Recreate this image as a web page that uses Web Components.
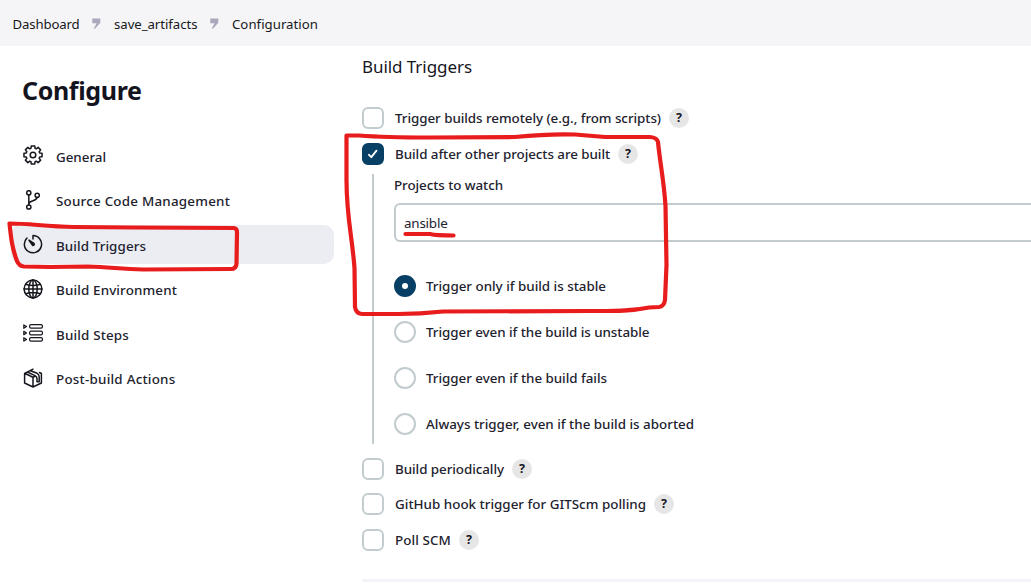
<!DOCTYPE html>
<html lang="en">
<head>
<meta charset="utf-8">
<title>Configure</title>
<style>
html,body{margin:0;height:584px;overflow:hidden;background:#fff}
body{font:460 13.4px/20px "Noto Sans","Open Sans",sans-serif;color:#22222e}
</style>
</head>
<body>
<config-page></config-page>
<script>
const define=(name,html,setup)=>customElements.define(name,class extends HTMLElement{
  connectedCallback(){
    if(this.shadowRoot)return;
    this.attachShadow({mode:'open'}).innerHTML=html;
    if(setup)setup(this,this.shadowRoot);
  }
});

// A single line of text tracked to an exact width.
define('text-run',`<style>:host{display:block;white-space:nowrap;flex:none}span{display:inline-block}</style><span><slot></slot></span>`,(el,root)=>{
  const w=+el.getAttribute('w'),s=root.querySelector('span');
  const n=el.textContent.length;
  s.style.letterSpacing=((w-s.getBoundingClientRect().width)/n).toFixed(3)+'px';
  el.style.width=w+'px';
});

define('crumb-mark',`<style>:host{display:block;width:9px;height:11px}svg{display:block}</style>
<svg width="9" height="11"><path d="M.3 .5H8.300V4.800L3.200 10.500H1.700L4.600 5.200H.3Z" fill="#aaa8bc"/></svg>`);

define('crumb-bar',`<style>
:host{display:flex;box-sizing:border-box;height:46px;padding:1px 0 0 12.500px;align-items:center;background:#f5f5f8;font-size:13.2px;font-weight:400;color:#181820}
crumb-mark{margin:-1px 13.500px 0 12px}
</style>
<text-run w="67">Dashboard</text-run><crumb-mark></crumb-mark><text-run w="83.500">save_artifacts</text-run><crumb-mark></crumb-mark><text-run w="86">Configuration</text-run>`);

const icons={
gear:'',
branch:'<circle cx="5.800" cy="2.800" r="2.100"/><circle cx="5.800" cy="17" r="2.100"/><circle cx="14.200" cy="5.300" r="2.100"/><path d="M5.800 5v10M14 7.500c0 4-8 2.500-8.200 6.500"/>',
timer:'<path d="M10 5V1.600a8.600 8.600 0 1 1-6.100 2.500"/><path d="M6 6.200l5 3.300c1 1-.5 2.500-1.600 1.600z" fill="#16161f"/>',
globe:'<circle cx="10" cy="10" r="8.900"/><ellipse cx="10" cy="10" rx="4.200" ry="8.900"/><path d="M10 1v18M1 10h18M2.700 5.200Q10 8 17.300 5.200M2.700 14.800Q10 12 17.300 14.800"/>',
steps:'<g stroke-width="1.200"><rect x="6.600" y="1.600" width="12.800" height="3.600" rx="1.400"/><rect x="6.600" y="8.200" width="12.800" height="3.600" rx="1.400"/><rect x="6.600" y="14.600" width="12.800" height="3.600" rx="1.400"/><path d="M.8 1.900v3.400l2.700-1.700zM.8 8.300v3.400L3.500 10zM.8 14.700v3.400l2.700-1.700z"/></g>',
box:'<path d="M10 19 1.600 15V5.300L10 1.200M1.600 5.300 10 9.200l2-.9M10 9.200V19l8.400-4V5.500L16.500 4.500M4.400 4 12 7.600c1.500.8 2 1.500 2 3v3.200h2.200V9c0-2-.6-3-2-3.700L7.500 2.700"/>'};

// Eight-toothed outline, alternating between the tooth and valley radii.
{
  const p=[];
  for(let k=0;k<8;k++)for(const [d,r] of [[-11,9.200],[11,9.200],[17,7],[28,7]]){
    const a=(k*45+d-90)*Math.PI/180;
    p.push((10+r*Math.cos(a)).toFixed(2)+' '+(10+r*Math.sin(a)).toFixed(2));
  }
  icons.gear=`<path d="M${p.join('L')}Z"/><circle cx="10" cy="10" r="2.800"/>`;
}

define('nav-item',`<style>
:host{display:flex;box-sizing:border-box;height:39px;align-items:center;gap:13px;padding-left:12px;border-radius:10px}
:host([active]){background:#ecedf3}
svg{display:block;flex:none;margin-top:-.5px}
text-run{margin-top:2px}
</style><svg width="20" height="20" fill="none" stroke="#16161f" stroke-width="1.5" stroke-linecap="round" stroke-linejoin="round"></svg>`,(el,root)=>{
  root.querySelector('svg').innerHTML=icons[el.getAttribute('icon')];
  const t=document.createElement('text-run');
  t.setAttribute('w',el.getAttribute('w'));
  t.textContent=el.getAttribute('label');
  root.append(t);
});

define('side-nav',`<style>
:host{display:block;width:334px;flex:none}
h1{margin:26px 0 28px 22px;font-size:25px;line-height:36px;font-weight:700;color:#14141f}
nav{display:grid;gap:5.500px;padding-left:11px}
</style>
<h1><text-run w="119.500">Configure</text-run></h1>
<nav>
<nav-item icon="gear" label="General" w="50"></nav-item>
<nav-item icon="branch" label="Source Code Management" w="174"></nav-item>
<nav-item icon="timer" label="Build Triggers" w="90" active></nav-item>
<nav-item icon="globe" label="Build Environment" w="121"></nav-item>
<nav-item icon="steps" label="Build Steps" w="73"></nav-item>
<nav-item icon="box" label="Post-build Actions" w="119.500"></nav-item>
</nav>`);

define('help-badge',`<style>
:host{display:flex;width:20px;height:20px;border-radius:50%;background:#e6e6e6;align-items:center;justify-content:center;font-size:12.5px;font-weight:700;color:#16161f;flex:none}
</style>?`);

define('choice-row',`<style>
:host{display:flex;height:22px;align-items:center}
i{box-sizing:border-box;width:22px;height:22px;border:2px solid #c2cccf;border-radius:6px;flex:none;margin-right:11px;display:flex;align-items:center;justify-content:center}
:host([radio]) i{border-radius:50%;margin-right:10px}
:host([checked]) i{background:#073f65;border-color:#073f65}
svg,b{display:none}
:host([checked]:not([radio])) svg{display:block}
:host([checked][radio]) b{display:block;width:6px;height:6px;border-radius:50%;background:#fff}
help-badge{margin-left:8px}
</style><i><svg width="12" height="10" fill="none" stroke="#fff" stroke-width="1.9" stroke-linecap="round" stroke-linejoin="round"><path d="M2 5.800 4.300 8.200 9.500 1.700"/></svg><b></b></i>`,(el,root)=>{
  const t=document.createElement('text-run');
  t.setAttribute('w',el.getAttribute('w'));
  t.textContent=el.getAttribute('label');
  root.append(t);
  if(el.hasAttribute('help'))root.append(document.createElement('help-badge'));
});

define('text-field',`<style>
:host{display:flex;box-sizing:border-box;height:39px;border:2px solid #c2cccf;border-radius:6px;padding:1px 8px 0;align-items:center;font-weight:400;margin-right:-20px}
</style><text-run w="43.500">ansible</text-run>`);

define('trigger-form',`<style>
:host{display:block;flex:1;min-width:0;padding:9px 0 0 28px}
h2{margin:0;font-size:17px;line-height:24px;font-weight:400;color:#16161f}
.first{margin-top:28px}
.second{margin-top:14px}
section{box-sizing:border-box;margin:9px 0 14px 10px;height:270px;border-left:2px solid #c2cccf;padding:1px 0 0 20px}
text-field{margin-top:8px}
.radios{display:grid;gap:24px;margin-top:33px}
hr{border:0;height:3px;background:#f3f3f8;margin:28px 0 0}
</style>
<h2><text-run w="110">Build Triggers</text-run></h2>
<choice-row class="first" label="Trigger builds remotely (e.g., from scripts)" w="266" help></choice-row>
<choice-row class="second" label="Build after other projects are built" w="215" help checked></choice-row>
<section>
<text-run w="109">Projects to watch</text-run>
<text-field></text-field>
<div class="radios">
<choice-row radio checked label="Trigger only if build is stable" w="180"></choice-row>
<choice-row radio label="Trigger even if the build is unstable" w="223.500"></choice-row>
<choice-row radio label="Trigger even if the build fails" w="181"></choice-row>
<choice-row radio label="Always trigger, even if the build is aborted" w="268"></choice-row>
</div>
</section>
<choice-row label="Build periodically" w="109" help></choice-row>
<choice-row style="margin-top:13px" label="GitHub hook trigger for GITScm polling" w="251" help></choice-row>
<choice-row style="margin-top:14px" label="Poll SCM" w="56" help></choice-row>
<hr>`);

// Hand-drawn marker strokes lying over the page.
define('marker-layer',`<style>:host{position:absolute;left:0;top:0;pointer-events:none}svg{display:block}</style>
<svg width="1031" height="584" fill="none" stroke="#e81c1c" stroke-width="4.2" stroke-linecap="round" stroke-linejoin="round">
<path d="M9.500 223.500C30 223.500 45 226.500 74 227L135 227.500 234 228Q237 228.500 237 232L236.500 264Q236 269 231 269L143 269.500C120 269 110 267 88 266.500L50 267 24 266.500Q19 266 17 261C12 248 11 238 9.500 223.500Z"/>
<path d="M346.500 135.500 359 135.500Q385 137.500 430 137.500L515 137Q550 133.500 575 134.500L605 137 650 137Q657 137.500 658 142C660 163 664 181 665.500 206L666.500 265 665 300Q664 306.500 659 307L649 307.500C630 311.500 612 311 590 311L443 311.500C425 313.500 415 314 398 314L362 314Q356 313.500 355 307L354.500 268C352 235 346.500 217 346.500 180Z"/>
<path d="M405.500 234 430 234Q436 235.500 453.500 235.500"/>
</svg>`);

define('config-page',`<style>
:host{display:block;position:relative;width:1031px;height:584px;overflow:hidden}
main{display:flex}
</style>
<crumb-bar></crumb-bar>
<main><side-nav></side-nav><trigger-form></trigger-form></main>
<marker-layer></marker-layer>`);
</script>
</body>
</html>
